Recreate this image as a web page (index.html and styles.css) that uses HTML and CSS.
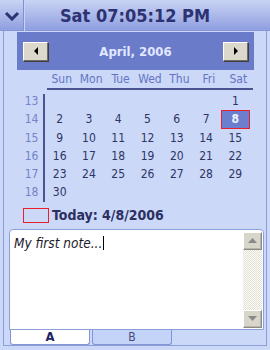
FILE: index.html
```html
<!DOCTYPE html>
<html>
<head>
<meta charset="utf-8">
<link rel="stylesheet" href="styles.css">
</head>
<body>
<div class="panel">
  <div class="header">
    <div class="chev">
      <svg width="16" height="10" viewBox="0 0 16 10"><path d="M2 2 L8 8 L14 2" fill="none" stroke="#2c3272" stroke-width="3"/></svg>
    </div>
    <div class="time">Sat 07:05:12 PM</div>
    <div class="spacer"></div>
  </div>
  <div class="body">
    <div class="monthbar">
      <div class="navbtn"><svg width="6" height="8" viewBox="0 0 6 8"><path d="M5 0 L1 4 L5 8 Z" fill="#000"/></svg></div>
      <div class="month">April, 2006</div>
      <div class="navbtn"><svg width="6" height="8" viewBox="0 0 6 8"><path d="M1 0 L5 4 L1 8 Z" fill="#000"/></svg></div>
    </div>
    <div class="daynames">
      <span>Sun</span><span>Mon</span><span>Tue</span><span>Wed</span><span>Thu</span><span>Fri</span><span>Sat</span>
    </div>
    <div class="cal">
      <div class="weeks">
        <span>13</span><span>14</span><span>15</span><span>16</span><span>17</span><span>18</span>
      </div>
      <div class="days">
        <span></span><span></span><span></span><span></span><span></span><span></span><span>1</span>
        <span>2</span><span>3</span><span>4</span><span>5</span><span>6</span><span>7</span><span class="sel">8</span>
        <span>9</span><span>10</span><span>11</span><span>12</span><span>13</span><span>14</span><span>15</span>
        <span>16</span><span>17</span><span>18</span><span>19</span><span>20</span><span>21</span><span>22</span>
        <span>23</span><span>24</span><span>25</span><span>26</span><span>27</span><span>28</span><span>29</span>
        <span>30</span><span></span><span></span><span></span><span></span><span></span><span></span>
      </div>
    </div>
    <div class="today"><span class="redbox"></span><span>Today: 4/8/2006</span></div>
    <div class="note">
      <div class="text">My first note...<span class="caret"></span></div>
      <div class="scroll">
        <div class="sbtn"><svg width="9" height="5" viewBox="0 0 9 5"><path d="M0 5 L4.5 0 L9 5 Z" fill="#8a8a8a"/></svg></div>
        <div class="track"></div>
        <div class="sbtn"><svg width="9" height="5" viewBox="0 0 9 5"><path d="M0 0 L4.5 5 L9 0 Z" fill="#8a8a8a"/></svg></div>
      </div>
    </div>
    <div class="tabs">
      <div class="tab active">A</div>
      <div class="tab">B</div>
    </div>
  </div>
</div>
</body>
</html>
```
FILE: styles.css
```css
html, body { margin: 0; padding: 0; }
body {
  width: 270px; height: 350px; overflow: hidden;
  background: #cbd8f8;
  font-family: "DejaVu Sans Condensed", "DejaVu Sans", sans-serif;
}
.panel { width: 270px; height: 350px; display: flex; flex-direction: column; }
.header {
  height: 31px; display: grid; grid-template-columns: 24px 1fr 24px;
  background: linear-gradient(#c9d3f4, #8f9fe0);
  border-bottom: 1px solid #8896d6;
  box-sizing: border-box;
}
.chev {
  display: flex; align-items: center; justify-content: center;
  border-right: 1px solid #7f8fd2;
  box-shadow: 1px 0 0 #c8d2f4;
}
.time {
  text-align: center; line-height: 31px; font-weight: bold; font-size: 18px;
  color: #2c3272;
}
.body {
  flex: 1; margin: 0 3px 4px 3px; border: 1px solid #8d9ed9; border-top: none;
  display: flex; flex-direction: column;
}
.monthbar {
  margin: 1px 12px 0 13px; height: 38px; background: #6a7bca;
  display: flex; align-items: center; justify-content: space-between;
  padding: 0 6px; box-sizing: border-box;
}
.navbtn {
  width: 25px; height: 19px; box-sizing: border-box;
  background: #dcd8cc;
  border-top: 1px solid #fff; border-left: 1px solid #fff;
  border-right: 1px solid #6f6d68; border-bottom: 1px solid #6f6d68;
  box-shadow: 1px 1px 0 #403e3a;
  display: flex; align-items: center; justify-content: center;
}
.month { color: #e2e8ff; font-weight: bold; font-size: 13px; }
.daynames {
  margin: 2px 13px 0 43px; display: grid; grid-template-columns: repeat(7, 1fr);
  font-size: 12px; color: #6474c4; height: 15px; line-height: 15px; text-align: center;
  border-bottom: 2px solid #4d5290; padding-bottom: 1px;
}
.cal { display: flex; margin-top: 2px; }
.weeks {
  width: 41px; display: flex; flex-direction: column; box-sizing: border-box;
  border-right: 2px solid #4d5290; margin: 2px 0 2px 0;
}
.weeks span {
  height: 18.3px; line-height: 18.3px; font-size: 12px; color: #7483c8;
  text-align: center; padding-left: 16px; box-sizing: border-box;
}
.weeks span:first-child { margin-top: -2px; }
.days {
  width: 205px; display: grid; grid-template-columns: repeat(7, 1fr);
  grid-auto-rows: 18.3px; font-size: 12px; color: #2e3463; text-align: center;
}
.days span { line-height: 18px; box-sizing: border-box; }
.days .sel {
  background: #6c7fce; border: 1px solid #e8202c; color: #eef2ff; font-weight: bold;
  line-height: 16px;
}
.today {
  display: flex; align-items: center; gap: 3px; margin: 3px 0 0 19px; height: 17px;
  font-weight: bold; font-size: 14px; color: #2c3060;
}
.redbox { width: 26px; height: 15px; box-sizing: border-box; border: 1px solid #e8202c; }
.note {
  margin: 5px 2px 0 5px; height: 101px; box-sizing: border-box;
  background: #fff; border: 1px solid #8d9fd8; border-radius: 4px 4px 0 0;
  display: flex; padding: 2px 1px 1px 0;
}
.text {
  flex: 1; font-style: italic; font-size: 13.5px; color: #1a1a2a; padding: 3px 0 0 4px;
  font-family: "DejaVu Sans Condensed", "DejaVu Sans", sans-serif;
}
.caret { display: inline-block; width: 1px; height: 14px; background: #000; vertical-align: -2px; margin-left: 1px; }
.scroll { width: 19px; display: flex; flex-direction: column; }
.sbtn {
  height: 18px; background: #d8d5cb; box-sizing: border-box;
  border-top: 1px solid #fff; border-left: 1px solid #fff;
  border-right: 1px solid #8c8a82; border-bottom: 1px solid #8c8a82;
  box-shadow: inset -1px -1px 0 #b8b5ab;
  display: flex; align-items: center; justify-content: center;
}
.track {
  flex: 1;
  background: repeating-conic-gradient(#e4e1d6 0 25%, #fbfbf8 0 50%) 0 0 / 2px 2px;
}
.tabs { display: flex; gap: 2px; margin-left: 6px; height: 15px; }
.tab {
  width: 80px; box-sizing: border-box; text-align: center; font-size: 12px; color: #444a7a;
  background: #c4d4f8; border: 1px solid #8395d4; border-top: none; border-radius: 0 0 3px 3px;
  line-height: 14px;
}
.tab.active { background: #fff; font-weight: bold; color: #1e2460; font-size: 13px; }
```
